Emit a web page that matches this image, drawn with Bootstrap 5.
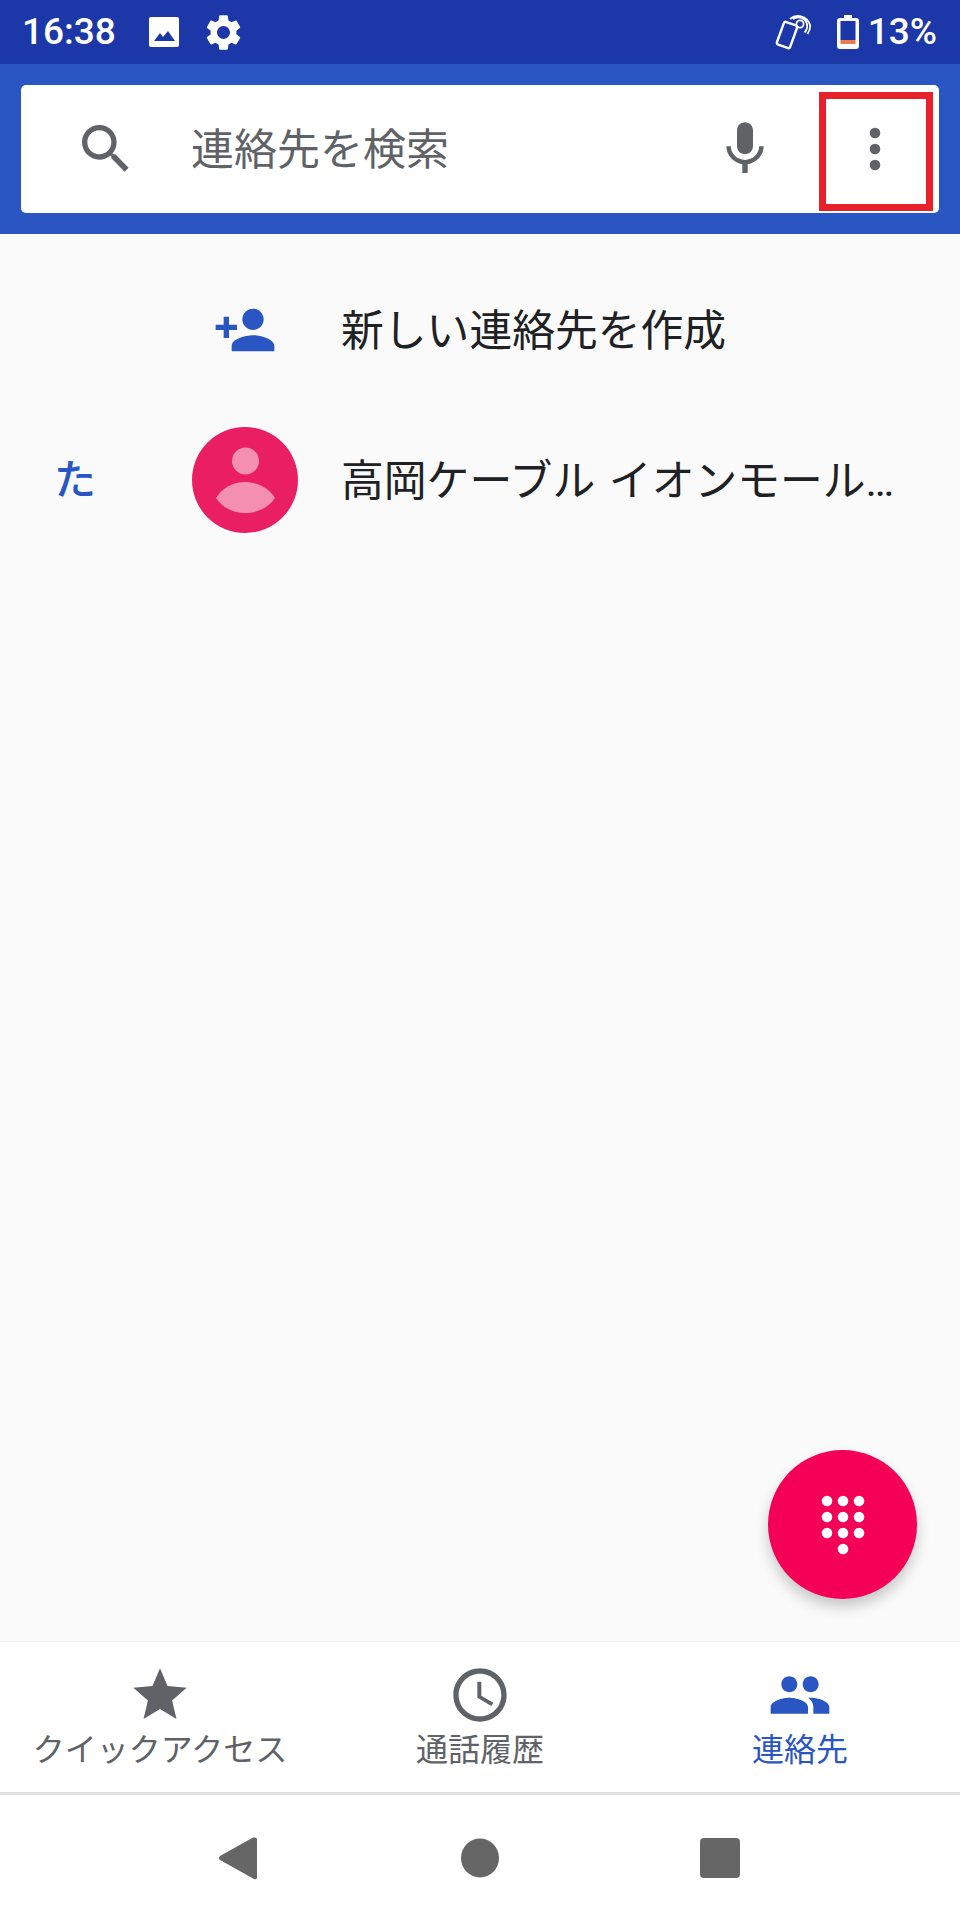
<!DOCTYPE html>
<html lang="ja">
<head>
    <meta charset="UTF-8">
    <meta name="viewport" content="width=device-width, initial-scale=1.0">
    <title>連絡先</title>
    <link href="https://cdn.jsdelivr.net/npm/bootstrap@5.3.3/dist/css/bootstrap.min.css" rel="stylesheet">
    <style>
        html, body {
            height: 100%;
            margin: 0;
        }

        body {
            font-family: Roboto, "Noto Sans CJK JP", sans-serif;
            background-color: #fafafa;
            color: #202124;
        }

        .screen {
            height: 1920px;
            position: relative;
            overflow: hidden;
        }

        .status-bar {
            height: 64px;
            background-color: #1c38a8;
            color: #fff;
            font-size: 37px;
            font-weight: 500;
            padding: 0 23px 0 22px;
        }

        .clock-text {
            width: 92px;
            margin-right: 34px;
        }

        .gallery-icon {
            margin-right: 22px;
        }

        .beam-icon {
            margin-right: 25px;
        }

        .battery-icon {
            margin-right: 9px;
        }

        .app-bar {
            height: 170px;
            background-color: #2a56c4;
            padding: 21px 21px;
        }

        .search-box {
            height: 128px;
            border-radius: 5px;
            position: relative;
        }

        .search-icon {
            margin-left: 53px;
            margin-right: 53px;
        }

        .search-text {
            font-size: 43px;
            color: #5f6368;
            padding-top: 2px;
        }

        .mic-icon {
            margin-right: 92px;
        }

        .more-dots {
            margin-right: 58px;
        }

        .red-frame {
            position: absolute;
            left: 798px;
            top: 7px;
            width: 114px;
            height: 119px;
            border: 7px solid #e8202a;
        }

        .contact-list {
            flex: 1;
        }

        .create-row {
            height: 96px;
            margin-top: 48px;
        }

        .person-row {
            height: 106px;
            margin-top: 49px;
        }

        .section-letter {
            width: 150px;
            text-align: center;
            font-size: 42px;
            font-weight: 500;
            color: #2a56c4;
        }

        .lead-slot {
            width: 106px;
            margin-left: 42px;
            margin-right: 43px;
        }

        .create-row .lead-slot {
            margin-left: 192px;
        }

        .row-text {
            font-size: 42.8px;
            color: #202124;
            padding-top: 3px;
            word-spacing: 3px;
        }

        .avatar-dot {
            width: 106px;
            height: 106px;
            display: block;
        }

        .dial-fab {
            position: absolute;
            left: 768px;
            top: 1450px;
            width: 149px;
            height: 149px;
            border-radius: 50%;
            background-color: #f50057;
            box-shadow: 0 8px 14px rgba(0, 0, 0, 0.2);
        }

        .tab-bar {
            height: 154px;
            background-color: #fff;
            border-top: 1px solid #eee;
            border-bottom: 3px solid #e0e0e0;
        }

        .tab-item {
            width: 320px;
            padding-top: 21px;
            color: #5f6368;
            font-size: 32px;
            line-height: 40px;
        }

        .tab-item svg {
            fill: #5f6368;
            display: block;
            margin-bottom: 3px;
        }

        .tab-active {
            color: #2a56c4;
        }

        .tab-active svg {
            fill: #2a56c4;
        }

        .sys-nav {
            height: 125px;
            background-color: #fff;
        }

        .sys-slot {
            width: 240px;
        }

        .back-icon {
            margin-right: 4px;
        }
    </style>
</head>
<body>
    <div class="screen d-flex flex-column">
        <!-- Status bar -->
        <div class="status-bar d-flex align-items-center">
            <span class="clock-text">16:38</span>
            <svg class="gallery-icon" width="32" height="32" viewBox="0 0 32 32"><path fill="#fff" fill-rule="evenodd" d="M3 1h26a2 2 0 0 1 2 2v26a2 2 0 0 1-2 2H3a2 2 0 0 1-2-2V3a2 2 0 0 1 2-2zm3 24h21l-7-10-5 6-3-4z"/></svg>
            <svg width="43" height="43" viewBox="0 0 24 24" fill="#fff"><path d="M19.14 12.94c.04-.3.06-.61.06-.94 0-.32-.02-.64-.07-.94l2.03-1.58c.18-.14.23-.41.12-.61l-1.92-3.32c-.12-.22-.37-.29-.59-.22l-2.39.96c-.5-.38-1.03-.7-1.62-.94l-.36-2.54c-.04-.24-.24-.41-.48-.41h-3.84c-.24 0-.43.17-.47.41l-.36 2.54c-.59.24-1.13.57-1.62.94l-2.39-.96c-.22-.08-.47 0-.59.22L2.74 8.87c-.12.21-.08.47.12.61l2.03 1.58c-.05.3-.09.63-.09.94s.02.64.07.94l-2.03 1.58c-.18.14-.23.41-.12.61l1.92 3.32c.12.22.37.29.59.22l2.39-.96c.5.38 1.03.7 1.62.94l.36 2.54c.05.24.24.41.48.41h3.84c.24 0 .44-.17.47-.41l.36-2.54c.59-.24 1.13-.56 1.62-.94l2.39.96c.22.08.47 0 .59-.22l1.92-3.32c.12-.22.07-.47-.12-.61l-2.01-1.58zM12 15.6c-1.98 0-3.6-1.62-3.6-3.6s1.62-3.6 3.6-3.6 3.6 1.62 3.6 3.6-1.62 3.6-3.6 3.6z"/></svg>
            <span class="ms-auto d-flex align-items-center">
                <svg class="beam-icon" width="38" height="36" viewBox="0 0 38 36" fill="none" stroke="#fff">
                    <rect x="6" y="9" width="14" height="24" rx="2" transform="rotate(20 13 21)" stroke-width="2.4"/>
                    <circle cx="26" cy="10" r="3.6" stroke-width="1.8"/>
                    <path d="M19 5a9 9 0 0 1 14 9c-.5 2-1 3-2.5 4.5M16 5a12.500 12.500 0 0 1 20 6c.5 3-.5 6-2.500 9" stroke-width="1.8"/>
                </svg>
                <svg class="battery-icon" width="22" height="34" viewBox="0 0 22 34">
                    <path fill="#fff" d="M7 0h8v3h4a3 3 0 0 1 3 3v25a3 3 0 0 1-3 3H3a3 3 0 0 1-3-3V6a3 3 0 0 1 3-3h4z"/>
                    <rect x="3.500" y="6" width="15" height="19" fill="#1c38a8"/>
                    <rect x="3.500" y="25" width="15" height="4" fill="#ef7a50"/>
                </svg>
                <span>13%</span>
            </span>
        </div>

        <!-- Search bar -->
        <div class="app-bar">
            <div class="search-box bg-white d-flex align-items-center">
                <svg class="search-icon" width="64" height="64" viewBox="0 0 24 24" fill="#5f6368"><path d="M15.500 14h-.79l-.28-.27C15.410 12.590 16 11.110 16 9.500 16 5.910 13.090 3 9.500 3S3 5.910 3 9.500 5.910 16 9.500 16c1.610 0 3.090-.59 4.230-1.570l.27.280v.79l5 4.990L20.490 19l-4.990-5zm-6 0C7.010 14 5 11.990 5 9.500S7.010 5 9.500 5 14 7.010 14 9.500 11.990 14 9.500 14z"/></svg>
                <span class="search-text flex-grow-1">連絡先を検索</span>
                <svg class="mic-icon" width="64" height="64" viewBox="0 0 24 24" fill="#5f6368"><path d="M12 14c1.660 0 2.990-1.340 2.990-3L15 5c0-1.660-1.340-3-3-3S9 3.340 9 5v6c0 1.660 1.340 3 3 3zm5.300-3c0 3-2.540 5.100-5.300 5.100S6.700 14 6.700 11H5c0 3.410 2.720 6.230 6 6.720V21h2v-3.280c3.280-.48 6-3.300 6-6.720h-1.700z"/></svg>
                <svg class="more-dots" width="12" height="44" viewBox="0 0 12 44" fill="#5f6368"><circle cx="6" cy="6" r="5.300"/><circle cx="6" cy="22" r="5.300"/><circle cx="6" cy="38" r="5.300"/></svg>
                <div class="red-frame"></div>
            </div>
        </div>

        <!-- Contacts -->
        <div class="contact-list">
            <div class="create-row d-flex align-items-center">
                <div class="lead-slot d-flex justify-content-center">
                    <svg width="64" height="64" viewBox="0 0 24 24" fill="#2a56c4"><path d="M15 12c2.210 0 4-1.790 4-4s-1.790-4-4-4-4 1.790-4 4 1.790 4 4 4zm-9-2V7H4v3H1v2h3v3h2v-3h3v-2H6zm9 4c-2.670 0-8 1.340-8 4v2h16v-2c0-2.660-5.330-4-8-4z"/></svg>
                </div>
                <span class="row-text">新しい連絡先を作成</span>
            </div>
            <div class="person-row d-flex align-items-center">
                <div class="section-letter">た</div>
                <div class="lead-slot">
                    <svg class="avatar-dot" viewBox="0 0 106 106">
                        <circle cx="53" cy="53" r="53" fill="#e91e63"/>
                        <circle cx="53.500" cy="34" r="13.500" fill="#f48fb1"/>
                        <path fill="#f48fb1" d="M24 71c6-10 17-16 29-16s24 6 30 16c-6 9-17 15-30 15s-23-6-29-15z"/>
                    </svg>
                </div>
                <span class="row-text">高岡ケーブル イオンモール…</span>
            </div>
        </div>

        <!-- Dial pad button -->
        <div class="dial-fab d-flex align-items-center justify-content-center">
            <svg width="44" height="60" viewBox="0 0 44 60" fill="#fff">
                <circle cx="6" cy="6" r="5.300"/><circle cx="22" cy="6" r="5.300"/><circle cx="38" cy="6" r="5.300"/>
                <circle cx="6" cy="22" r="5.300"/><circle cx="22" cy="22" r="5.300"/><circle cx="38" cy="22" r="5.300"/>
                <circle cx="6" cy="38" r="5.300"/><circle cx="22" cy="38" r="5.300"/><circle cx="38" cy="38" r="5.300"/>
                <circle cx="22" cy="54" r="5.300"/>
            </svg>
        </div>

        <!-- Tabs -->
        <div class="tab-bar d-flex">
            <div class="tab-item d-flex flex-column align-items-center">
                <svg width="64" height="64" viewBox="0 0 24 24"><path d="M12 17.270L18.180 21l-1.640-6.970L22 9.240l-7.190-.61L12 2 9.190 8.630 2 9.240l5.460 4.790L5.820 21z"/></svg>
                <span>クイックアクセス</span>
            </div>
            <div class="tab-item d-flex flex-column align-items-center">
                <svg width="64" height="64" viewBox="0 0 24 24"><path d="M11.990 2C6.470 2 2 6.480 2 12s4.470 10 9.990 10C17.520 22 22 17.520 22 12S17.520 2 11.990 2zM12 20c-4.420 0-8-3.580-8-8s3.580-8 8-8 8 3.580 8 8-3.580 8-8 8z"/><path d="M12.500 7H11v6l5.250 3.150.75-1.230-4.500-2.670z"/></svg>
                <span>通話履歴</span>
            </div>
            <div class="tab-item tab-active d-flex flex-column align-items-center">
                <svg width="64" height="64" viewBox="0 0 24 24"><path d="M16 11c1.660 0 2.990-1.340 2.990-3S17.660 5 16 5c-1.660 0-3 1.340-3 3s1.340 3 3 3zm-8 0c1.660 0 2.990-1.340 2.990-3S9.660 5 8 5C6.340 5 5 6.340 5 8s1.340 3 3 3zm0 2c-2.330 0-7 1.170-7 3.500V19h14v-2.500c0-2.330-4.670-3.500-7-3.500zm8 0c-.29 0-.62.020-.97.050 1.160.84 1.970 1.970 1.970 3.450V19h6v-2.500c0-2.330-4.670-3.500-7-3.500z"/></svg>
                <span>連絡先</span>
            </div>
        </div>

        <!-- System navigation -->
        <div class="sys-nav d-flex align-items-center justify-content-center">
            <div class="sys-slot d-flex justify-content-center">
                <svg class="back-icon" width="38" height="44" viewBox="0 0 38 44" fill="#666"><path d="M36 1.500a2 2 0 0 1 2 1.500v38a2 2 0 0 1-3 2L1 24a2.500 2.500 0 0 1 0-4L34 1.500z"/></svg>
            </div>
            <div class="sys-slot d-flex justify-content-center">
                <svg width="38" height="40" viewBox="0 0 38 40" fill="#666"><ellipse cx="19" cy="20" rx="19" ry="19.500"/></svg>
            </div>
            <div class="sys-slot d-flex justify-content-center">
                <svg width="40" height="40" viewBox="0 0 40 40" fill="#666"><rect width="40" height="40" rx="4"/></svg>
            </div>
        </div>
    </div>

    <script src="https://cdn.jsdelivr.net/npm/bootstrap@5.3.3/dist/js/bootstrap.bundle.min.js"></script>
</body>
</html>
